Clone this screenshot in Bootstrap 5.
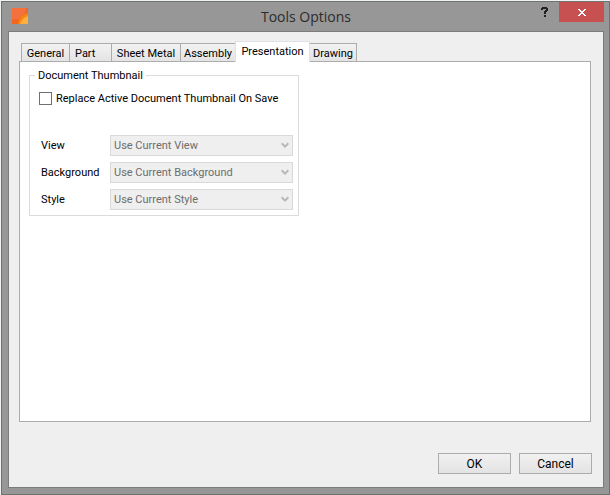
<!DOCTYPE html>
<html lang="en">
<head>
<meta charset="utf-8">
<meta name="viewport" content="width=device-width, initial-scale=1">
<title>Tools Options</title>
<link href="https://cdn.jsdelivr.net/npm/bootstrap@5.3.0/dist/css/bootstrap.min.css" rel="stylesheet">
<style>
  body { background: #eef2f0; font-family: Roboto, "Liberation Sans", sans-serif; font-size: 11px; line-height: 16px; color: #000; }
  .frame { padding: 1px 0 0 1px; }
  .window { background: #979797; border: 1px solid #6f7170; padding: 0 5px 6px 6px; }
  .title-bar { height: 29px; }
  .title-side { flex: 1 1 0; }
  .window-title { font: 400 14px/22px "Open Sans", sans-serif; color: #2b2b2b; }
  .help-btn { width: 29px; height: 20px; }
  .close-btn { width: 45px; height: 20px; background: #c75050; }
  .client { background: #efefef; border: 1px solid #7c7c7c; padding: 9px 12px 13px 10px; }
  .options-tabs { padding-left: 2px; border: 0; }
  .options-tabs .nav-link { width: 49px; margin: 0 0 0 -1px; padding: 0; height: 18px; border: 1px solid #acacac; border-bottom: 0; border-radius: 0; color: #000; text-align: center; line-height: 20px; background: linear-gradient(#f2f2f2, #e4e4e4); }
  .options-tabs .nav-item:first-child .nav-link { margin-left: 0; }
  .options-tabs .tab-short { width: 43px; padding-left: 5px; text-align: left; }
  .options-tabs .tab-long { width: 70px; }
  .options-tabs .tab-medium { width: 56px; }
  .options-tabs .nav-link.active { position: relative; z-index: 1; width: 75px; height: 21px; margin-bottom: -1px; background: #fff; color: #000; }
  .options-tabs .tab-last { width: 48px; }
  .options-pane { background: #fff; border: 1px solid #acacac; padding: 5px 9px; }
  .group-box { width: 270px; max-width: 100%; border: 1px solid #dcdcdc; padding: 0 5px 5px 9px; }
  .group-box legend { float: none; width: auto; margin: 0 0 9px -4px; padding: 2px 3px 0; background: #fff; font-size: 11px; line-height: 14px; }
  .thumb-check { gap: 4px; margin-bottom: 30px; min-height: 13px; line-height: 13px; white-space: nowrap; }
  .thumb-check .form-check-input { width: 13px; height: 13px; margin: 0; border: 1px solid #707070; border-radius: 0; }
  .field-rows { gap: 6px; padding-left: 2px; }
  .field-rows label { width: 69px; }
  .field-rows .form-select { height: 21px; min-height: 0; padding: 1px 16px 0 3px; border: 1px solid #d9d9d9; border-radius: 0; background: #efefef; color: #6d6d6d; font-size: 11px; line-height: 18px; opacity: 1; }
  .chevron { position: absolute; right: 4px; top: 7px; pointer-events: none; }
  .dialog-actions { gap: 8px; padding-top: 31px; margin-right: -1px; }
  .dialog-btn { width: 73px; height: 21px; padding: 0; border: 1px solid #acacac; border-radius: 0; background: linear-gradient(#f1f1f1, #e3e3e3); font-size: 12px; line-height: 18px; color: #000; }
</style>
</head>
<body>
<div class="frame min-vh-100 d-flex flex-column">
  <main class="window flex-grow-1 d-flex flex-column">
    <header class="title-bar d-flex align-items-start">
      <div class="title-side">
        <svg class="d-block ms-1 mt-1" width="16" height="18" viewBox="0 0 16 18" aria-hidden="true">
          <path fill="#f26522" d="M0 2h16v16H0z"/>
          <path fill="#f4703c" d="M0 2h14q0 5-3 8-4 4-11 3z"/>
          <path fill="#f7870f" d="M16 7v11H6q0-4 3-7t7-4z"/>
          <path fill="#fbb040" d="M16 10v8H8q1-3 3-5t5-3z"/>
        </svg>
      </div>
      <h1 class="window-title m-0 pt-1">Tools Options</h1>
      <div class="title-side d-flex justify-content-end">
        <button type="button" class="help-btn btn p-0 border-0 rounded-0 d-flex align-items-center justify-content-center" aria-label="Help">
          <svg width="8" height="10" viewBox="0 0 8 10" aria-hidden="true"><path fill="#222" d="M1 0h5v1h1v3H6v1H5v2H3V4h1V3h1V2H2v1H0V1h1zM3 8h2v2H3z"/></svg>
        </button>
        <button type="button" class="close-btn btn p-0 border-0 rounded-0 d-flex align-items-center justify-content-center" aria-label="Close">
          <svg width="8" height="8" viewBox="0 0 8 8" aria-hidden="true"><path fill="#fff" d="M0 1h2v1h1v1h2V2h1V1h2v1H7v1H6v1H5v1h1v1h1v1h1v1H6V7H5V6H3v1H2v1H0V7h1V6h1V5h1V4H2V3H1V2H0z"/></svg>
        </button>
      </div>
    </header>
    <form class="client flex-grow-1 d-flex flex-column">
      <ul class="options-tabs nav nav-tabs align-items-end flex-nowrap" role="tablist">
        <li class="nav-item" role="presentation"><button type="button" class="nav-link" role="tab" aria-selected="false">General</button></li>
        <li class="nav-item" role="presentation"><button type="button" class="nav-link tab-short" role="tab" aria-selected="false">Part</button></li>
        <li class="nav-item" role="presentation"><button type="button" class="nav-link tab-long" role="tab" aria-selected="false">Sheet Metal</button></li>
        <li class="nav-item" role="presentation"><button type="button" class="nav-link tab-medium" role="tab" aria-selected="false">Assembly</button></li>
        <li class="nav-item" role="presentation"><button type="button" class="nav-link active" role="tab" aria-selected="true" aria-controls="presentation" id="presentation-tab">Presentation</button></li>
        <li class="nav-item" role="presentation"><button type="button" class="nav-link tab-last" role="tab" aria-selected="false">Drawing</button></li>
      </ul>
      <section class="options-pane flex-grow-1" id="presentation" role="tabpanel" aria-labelledby="presentation-tab">
        <fieldset class="group-box">
          <legend>Document Thumbnail</legend>
          <div class="thumb-check d-flex align-items-center">
            <input class="form-check-input flex-shrink-0" type="checkbox" id="replace">
            <label for="replace">Replace Active Document Thumbnail On Save</label>
          </div>
          <div class="field-rows d-flex flex-column">
            <div class="d-flex align-items-center">
              <label class="flex-shrink-0" for="view">View</label>
              <div class="position-relative flex-grow-1">
                <select class="form-select" id="view" disabled><option>Use Current View</option></select>
                <svg class="chevron" width="8" height="7" viewBox="0 0 8 7" aria-hidden="true"><path fill="none" stroke="#b8b8b8" stroke-width="2" d="M.7 1.2L4 4.6l3.3-3.4"/></svg>
              </div>
            </div>
            <div class="d-flex align-items-center">
              <label class="flex-shrink-0" for="background">Background</label>
              <div class="position-relative flex-grow-1">
                <select class="form-select" id="background" disabled><option>Use Current Background</option></select>
                <svg class="chevron" width="8" height="7" viewBox="0 0 8 7" aria-hidden="true"><path fill="none" stroke="#b8b8b8" stroke-width="2" d="M.7 1.2L4 4.6l3.3-3.4"/></svg>
              </div>
            </div>
            <div class="d-flex align-items-center">
              <label class="flex-shrink-0" for="style">Style</label>
              <div class="position-relative flex-grow-1">
                <select class="form-select" id="style" disabled><option>Use Current Style</option></select>
                <svg class="chevron" width="8" height="7" viewBox="0 0 8 7" aria-hidden="true"><path fill="none" stroke="#b8b8b8" stroke-width="2" d="M.7 1.2L4 4.6l3.3-3.4"/></svg>
              </div>
            </div>
          </div>
        </fieldset>
      </section>
      <div class="dialog-actions d-flex justify-content-end">
        <button type="button" class="dialog-btn btn">OK</button>
        <button type="button" class="dialog-btn btn">Cancel</button>
      </div>
    </form>
  </main>
</div>
<script src="https://cdn.jsdelivr.net/npm/bootstrap@5.3.0/dist/js/bootstrap.bundle.min.js"></script>
</body>
</html>
